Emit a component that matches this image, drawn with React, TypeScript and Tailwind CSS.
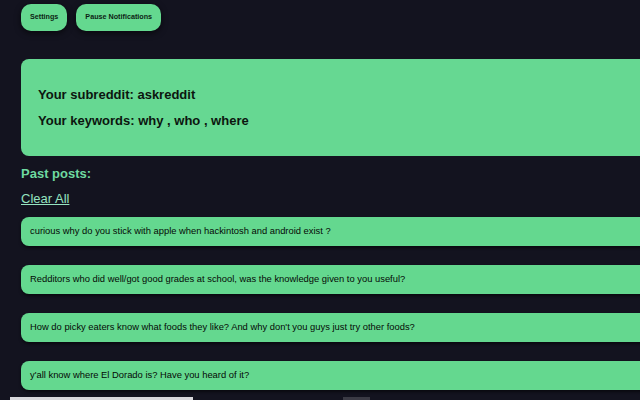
import React from 'react';

const posts = [
  'curious why do you stick with apple when hackintosh and android exist ?',
  'Redditors who did well/got good grades at school, was the knowledge given to you useful?',
  "How do picky eaters know what foods they like? And why don't you guys just try other foods?",
  "y'all know where El Dorado is? Have you heard of it?",
];

export default function App() {
  return (
    <div className="h-[400px] w-[640px] overflow-hidden bg-[#13131f] font-[family-name:Liberation_Sans,Arial,sans-serif]">
      <div className="flex gap-[9px] pl-[21px] pt-[4px]">
        <button className="h-[27px] rounded-[10px] bg-[#64d88f] px-[9px] text-[7.2px] font-bold text-[#0d1f14] shadow-[0_2px_6px_rgba(0,0,0,0.6)]">
          Settings
        </button>
        <button className="h-[27px] rounded-[10px] bg-[#64d88f] px-[9px] text-[7.2px] font-bold text-[#0d1f14] shadow-[0_2px_6px_rgba(0,0,0,0.6)]">
          Pause Notifications
        </button>
      </div>

      <div className="ml-[21px] mt-[28px] flex h-[97px] w-[640px] flex-col justify-center gap-[11px] rounded-[8px] bg-[#66d892] pl-[17px] text-[13px] leading-[15px] font-bold text-[#0c160f]">
        <p>Your subreddit: askreddit</p>
        <p>Your keywords: why , who , where</p>
      </div>

      <div className="flex flex-col items-start pl-[21px]">
        <p className="mt-[10px] text-[13px] leading-[15px] font-bold text-[#6ed9a0]">Past posts:</p>
        <button className="mt-[10px] text-[13px] leading-[15px] text-[#95e4c0] underline">Clear All</button>
      </div>

      <div className="mt-[11px] flex flex-col gap-[19px] pl-[21px]">
        {posts.map(p => (
          <div
            key={p}
            className="flex h-[29px] w-[640px] shrink-0 items-center rounded-[8px] bg-[#64d88f] pl-[9px] text-[9.4px] text-[#050a06] shadow-[0_2px_3px_rgba(0,0,0,0.5)]"
          >
            {p}
          </div>
        ))}
      </div>

      <div className="mt-[7px] flex gap-[150px] pl-[10px]">
        <div className="h-[3px] w-[183px] bg-[#d8d8dc]" />
        <div className="h-[3px] w-[27px] bg-[#3a3a44]" />
      </div>
    </div>
  );
}
